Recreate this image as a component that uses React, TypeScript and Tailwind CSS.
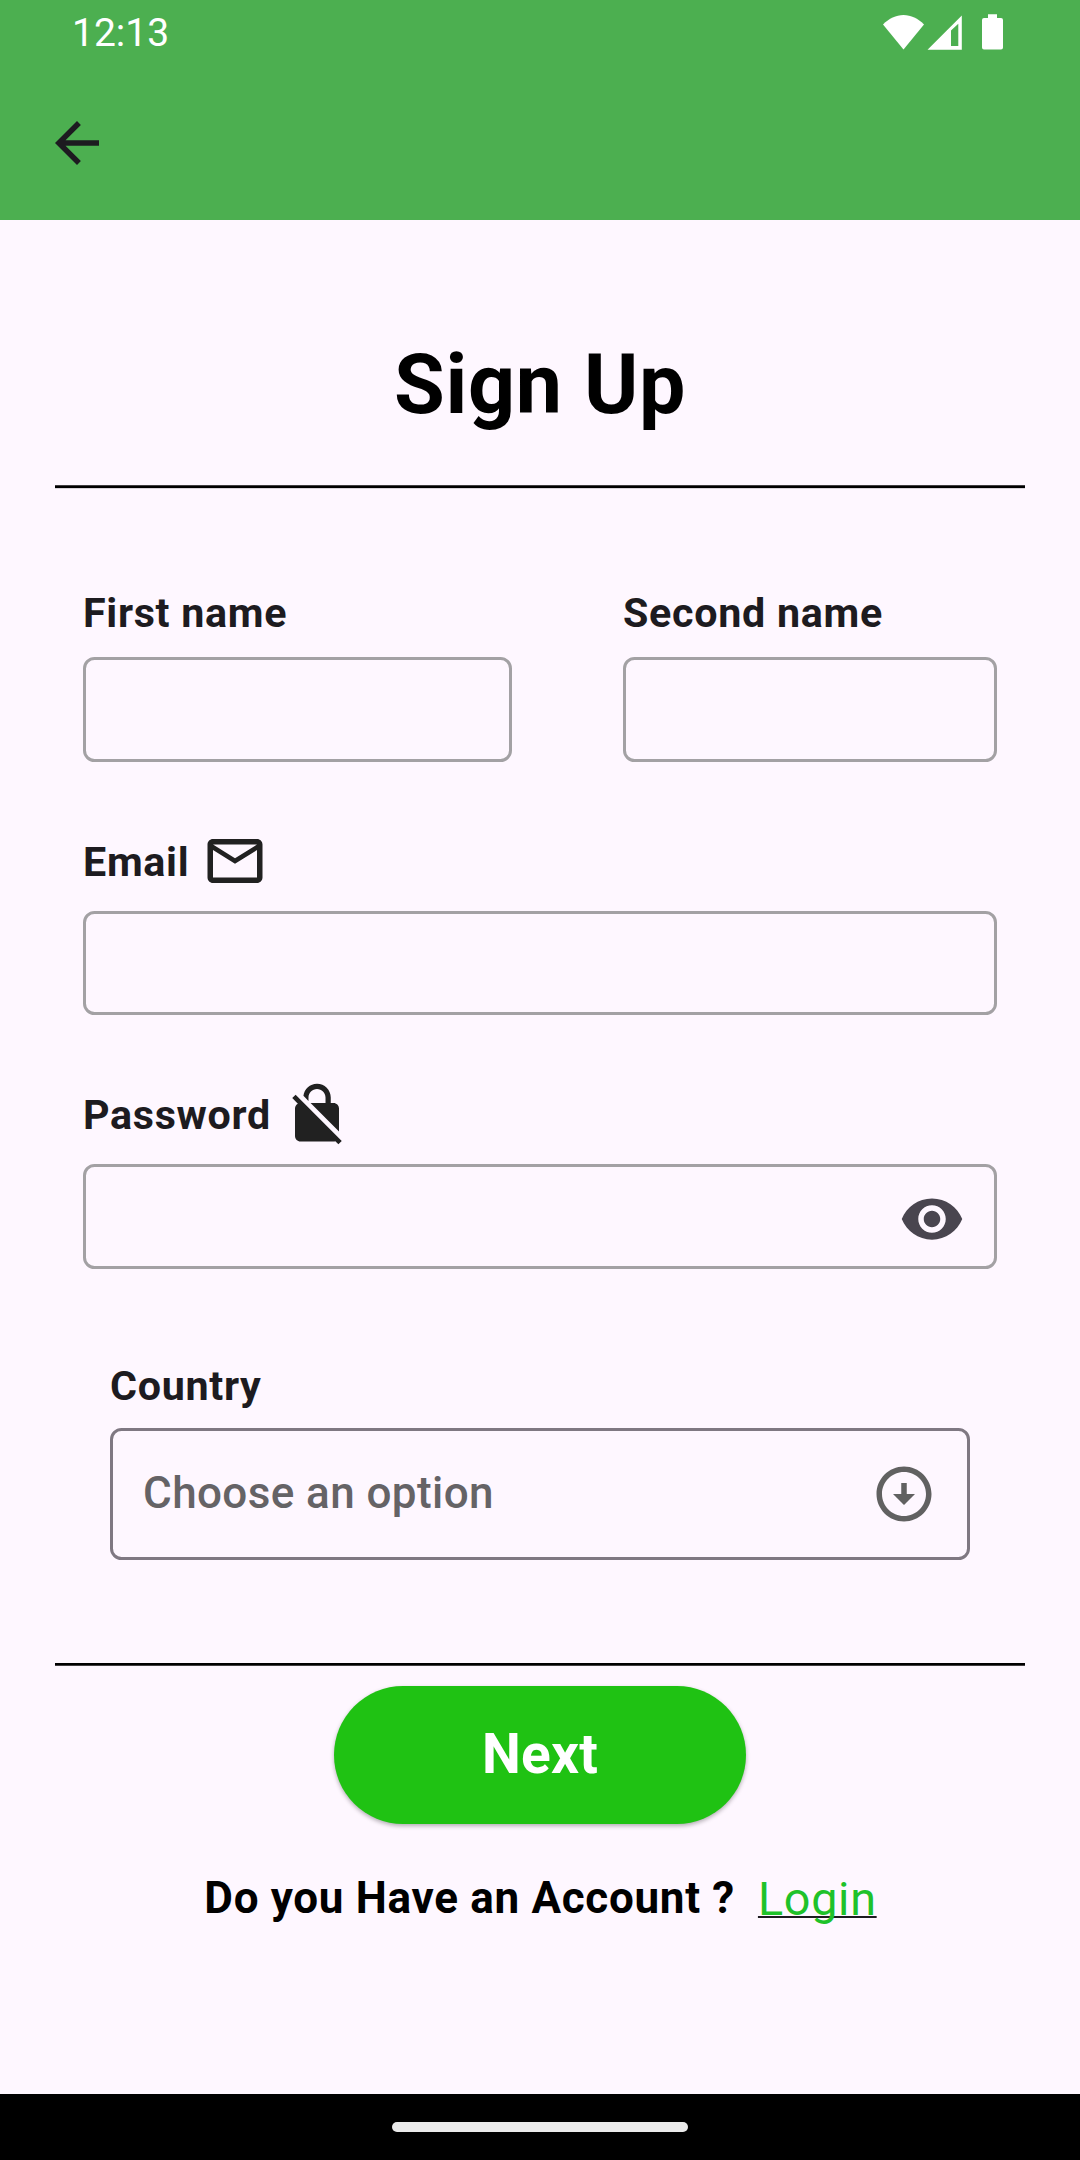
import type { ReactNode } from "react";

const ICONS = {
  back: "M20 11H7.83l5.59-5.59L12 4l-8 8 8 8 1.41-1.41L7.83 13H20v-2z",
  mail: "M22 6c0-1.1-.9-2-2-2H4c-1.1 0-2 .9-2 2v12c0 1.1.9 2 2 2h16c1.1 0 2-.9 2-2V6zm-2 0l-8 5-8-5h16zm0 12H4V8l8 5 8-5v10z",
  noEncryption:
    "M21 21.78L4.22 5 3 6.22l2.04 2.04C4.42 8.6 4 9.25 4 10v10c0 1.1.9 2 2 2h12c.23 0 .45-.05.66-.12L19.78 23 21 21.78zM8.9 6c0-1.71 1.39-3.1 3.1-3.1s3.1 1.39 3.1 3.1v2H9.66L20 18.34V10c0-1.1-.9-2-2-2h-1V6c0-2.76-2.24-5-5-5-2.56 0-4.64 1.93-4.94 4.4L8.9 7.24V6z",
  eye: "M12 4.5C7 4.5 2.73 7.61 1 12c1.73 4.39 6 7.5 11 7.5s9.27-3.11 11-7.5c-1.73-4.39-6-7.5-11-7.5zM12 17c-2.76 0-5-2.24-5-5s2.24-5 5-5 5 2.24 5 5-2.24 5-5 5zm0-8c-1.66 0-3 1.34-3 3s1.34 3 3 3 3-1.34 3-3-1.34-3-3-3z",
  circleDown:
    "M12 4c4.41 0 8 3.59 8 8s-3.59 8-8 8-8-3.59-8-8 3.59-8 8-8m0-2C6.48 2 2 6.48 2 12s4.48 10 10 10 10-4.48 10-10S17.52 2 12 2zm1 10V8h-2v4H8l4 4 4-4h-3z",
};

function Icon({ d, className }: { d: string; className: string }) {
  return (
    <svg viewBox="0 0 24 24" fill="currentColor" className={`size-[66px] shrink-0 ${className}`}>
      <path d={d} />
    </svg>
  );
}

function Label({ children }: { children: ReactNode }) {
  return (
    <span className="block text-[41.25px] leading-[48px] font-bold tracking-[0.69px] whitespace-nowrap text-[#1d1b20]">
      {children}
    </span>
  );
}

const field = "rounded-[11.5px] border-3 border-[#a3a1a4]";

function StatusBar() {
  return (
    <div className="flex h-[66px] justify-between pr-[76px] pl-[72px] text-white">
      <span className="text-[39px] leading-[67px]">12:13</span>
      <svg viewBox="0 0 122 66" fill="currentColor" className="h-[66px] w-[122px]">
        <path d="M1 24.5C7 18.5 14 15 21.500 15C29 15 36 18.500 42 24.500L21.500 49.500Z" />
        <path fillRule="evenodd" d="M45.500 49.700L79.800 15.500V49.700ZM69 30.500V46H76.300V23.800Z" />
        <path d="M106 14.300h9V18h4a2 2 0 0 1 2 2v27.500a2 2 0 0 1-2 2h-17a2 2 0 0 1-2-2V20a2 2 0 0 1 2-2h4z" />
      </svg>
    </div>
  );
}

export default function App() {
  return (
    <div className="flex h-[2160px] w-[1080px] flex-col bg-[#fef7ff] font-['Roboto',sans-serif]">
      <header className="h-[220px] bg-[#4caf50]">
        <StatusBar />
        <div className="flex h-[154px] items-center pl-[44px]">
          <Icon d={ICONS.back} className="text-[#1d1b20]" />
        </div>
      </header>

      <main className="flex flex-1 flex-col px-[55px] pt-[117px]">
        <h1 className="text-center text-[82.5px] leading-[96px] font-bold tracking-[0.69px] text-black">Sign Up</h1>
        <div className="mt-[52px] h-[4px] border-t border-b border-t-[#403e40] border-b-[#d8d2d9] bg-black" />

        <div className="mt-[100px] flex justify-between pr-[28px] pl-[28px]">
          <div className="w-[429px]">
            <Label>First name</Label>
            <div className={`mt-5 h-[105px] ${field}`} />
          </div>
          <div className="w-[374px]">
            <Label>Second name</Label>
            <div className={`mt-5 h-[105px] ${field}`} />
          </div>
        </div>

        <div className="mt-[66px] px-[28px]">
          <div className="flex h-[66px] items-center">
            <div className="pt-[2px]">
              <Label>Email</Label>
            </div>
            <Icon d={ICONS.mail} className="ml-[13px] text-[#212121]" />
          </div>
          <div className={`mt-[17px] h-[104px] ${field}`} />
        </div>

        <div className="mt-[66px] px-[28px]">
          <div className="flex h-[66px] items-center">
            <div className="pt-[2px]">
              <Label>Password</Label>
            </div>
            <Icon d={ICONS.noEncryption} className="ml-[13.5px] text-[#212121]" />
          </div>
          <div className={`mt-[17px] flex h-[105px] items-center justify-end pt-[5px] pr-[29.5px] ${field}`}>
            <Icon d={ICONS.eye} className="text-[#49454f]" />
          </div>
        </div>

        <div className="mt-[93px] px-[55px]">
          <Label>Country</Label>
          <div className="mt-[18px] flex h-[132px] items-center justify-between rounded-[11.5px] border-3 border-[#7f7882] pr-[30px] pl-[30px]">
            <span className="pb-[2px] text-[44px] font-medium tracking-[0.41px] text-[#656366]">Choose an option</span>
            <Icon d={ICONS.circleDown} className="text-[#616161]" />
          </div>
        </div>

        <div className="mt-[103px] h-[3px] border-b border-b-[#403e40] bg-black" />
        <button className="mt-5 h-[138px] w-[412px] self-center rounded-full bg-[#1fc213] pb-[2px] text-[55px] font-bold tracking-[0.28px] text-white shadow-[0_2px_4px_rgba(0,0,0,0.3)]">
          Next
        </button>

        <div className="mt-[44px] flex h-[60px] items-center justify-center pl-px text-black">
          <span className="text-[44px] font-bold tracking-[0.69px] whitespace-nowrap">Do you Have an Account ?</span>
          <a className="ml-[23px] pt-[2px] text-[46.75px] tracking-[0.69px] text-[#1fc22a] underline decoration-[#1d1b20] decoration-[2px] underline-offset-[1px] [text-decoration-skip-ink:none]">
            Login
          </a>
        </div>
      </main>

      <footer className="flex h-[66px] justify-center bg-black pt-[28px]">
        <div className="h-[10px] w-[296px] rounded-full bg-[#ebebeb]" />
      </footer>
    </div>
  );
}
